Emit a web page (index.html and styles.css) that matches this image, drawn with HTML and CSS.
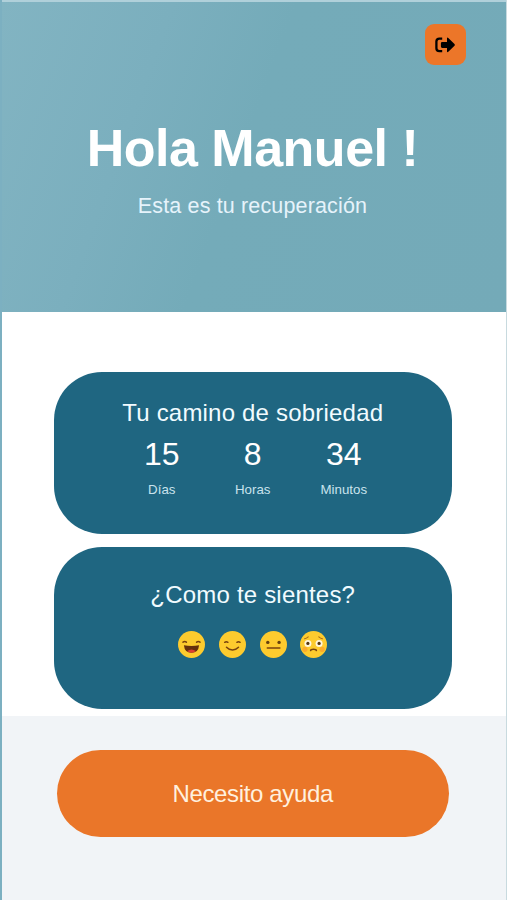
FILE: index.html
```html
<!DOCTYPE html>
<html lang="es">
<head>
<meta charset="utf-8">
<meta name="viewport" content="width=device-width, initial-scale=1">
<title>Mi recuperación</title>
<link rel="stylesheet" href="styles.css">
</head>
<body>
<div class="app">
  <header class="hero">
    <button class="logout" aria-label="Salir">
      <svg width="22" height="18" viewBox="0 0 22 18" aria-hidden="true">
        <path d="M8.2 2.7H5.4Q2.4 2.7 2.4 5.5V12.3Q2.4 15.1 5.4 15.1H8.2" fill="none" stroke="#000" stroke-width="2.3"/>
        <path d="M8.2 5.9H13V2.6Q13 1 14.3 2L20.5 8Q21.3 8.9 20.5 9.8L14.3 15.8Q13 16.8 13 15.2V11.9H8.2Q6.9 11.9 6.9 10.6V7.2Q6.9 5.9 8.2 5.9Z"/>
      </svg>
    </button>
    <h1 class="greeting">Hola Manuel !</h1>
    <p class="subtitle">Esta es tu recuperación</p>
  </header>
  <main class="cards">
    <section class="card sobriety">
      <h2 class="card-title">Tu camino de sobriedad</h2>
      <div class="counters">
        <div class="counter"><span class="value">15</span><span class="unit">Días</span></div>
        <div class="counter"><span class="value">8</span><span class="unit">Horas</span></div>
        <div class="counter"><span class="value">34</span><span class="unit">Minutos</span></div>
      </div>
    </section>
    <section class="card mood">
      <h2 class="card-title">¿Como te sientes?</h2>
      <div class="faces">
        <svg class="face" viewBox="0 0 27 27" role="img" aria-label="Muy bien">
          <circle cx="13.5" cy="13.5" r="13.5" fill="#fdcb2e"/>
          <path d="M5 11.2Q6.7 9.9 8.4 11.2M18.6 11.2Q20.3 9.9 22 11.2" class="line"/>
          <path d="M5.9 14.2Q13.5 15.6 21.1 14.2Q20.4 21.8 13.5 21.8T5.9 14.2Z" fill="#65300c"/>
          <path d="M9.2 20Q13.5 16.8 17.8 20Q16.2 21.7 13.5 21.7T9.2 20Z" fill="#dd3f30"/>
        </svg>
        <svg class="face" viewBox="0 0 27 27" role="img" aria-label="Bien">
          <circle cx="13.5" cy="13.5" r="13.5" fill="#fdcb2e"/>
          <path d="M5.7 11.3Q7.3 10 8.9 11.3M17.9 11.3Q19.5 10 21.1 11.3M7.5 16.3Q10 19 13.5 19T19.5 16.3" class="line"/>
        </svg>
        <svg class="face" viewBox="0 0 27 27" role="img" aria-label="Regular">
          <circle cx="13.5" cy="13.5" r="13.5" fill="#fdcb2e"/>
          <circle cx="7.8" cy="11.4" r="1.7" fill="#65400f"/><circle cx="19.1" cy="11.4" r="1.7" fill="#65400f"/>
          <path d="M7.3 17H19.9" class="line"/>
        </svg>
        <svg class="face" viewBox="0 0 27 27" role="img" aria-label="Mal">
          <circle cx="13.5" cy="13.5" r="13.5" fill="#fdcb2e"/>
          <circle cx="4.9" cy="18.3" r="2.6" fill="#fbab2c"/><circle cx="22.1" cy="18.3" r="2.6" fill="#fbab2c"/>
          <circle cx="7.9" cy="12.4" r="3.5" fill="#fff6dc"/><circle cx="19.1" cy="12.4" r="3.5" fill="#fff6dc"/>
          <circle cx="7.9" cy="12.4" r="1.6" fill="#54350f"/><circle cx="19.1" cy="12.4" r="1.6" fill="#54350f"/>
          <path d="M4.6 7.8Q6.5 7.4 8.2 5.9M18.8 5.9Q20.5 7.4 22.4 7.8" class="brow"/>
          <path d="M10.6 19.6Q10.8 18.3 13.5 18.3T16.4 19.6" class="line"/>
        </svg>
      </div>
    </section>
  </main>
  <footer class="footer">
    <button class="help">Necesito ayuda</button>
  </footer>
</div>
</body>
</html>
```
FILE: styles.css
```css
* { box-sizing: border-box; margin: 0; }

body {
  font-family: "Liberation Sans", Arial, sans-serif;
  background: #fff;
}

.app {
  height: 900px;
  display: flex;
  flex-direction: column;
  border-left: 2.5px solid #7cb0c1;
  border-right: 1px solid #c8dadf;
  overflow: hidden;
}

.hero {
  height: 312px;
  margin-left: -2px;
  padding: 24px 40px 0 2px;
  display: flex;
  flex-direction: column;
  align-items: center;
  border-top: 2px solid #b0d0da;
  background: linear-gradient(110deg, #82b4c2 0%, #7bafbe 28%, #74abb9 48%, #74aab8 100%);
  color: #fff;
}

.logout {
  align-self: flex-end;
  flex: none;
  width: 41px;
  height: 41px;
  margin-top: -2px;
  padding: 0 1px 0 0;
  border: 0;
  border-radius: 9px;
  background: #ec7629;
  display: flex;
  align-items: center;
  justify-content: center;
}

.greeting {
  margin: 53px 0 0 37px;
  font-size: 52px;
  line-height: 60px;
  letter-spacing: -0.5px;
  white-space: nowrap;
}

.subtitle {
  margin: 15px 0 0 37px;
  font-size: 21.5px;
  line-height: 26px;
  letter-spacing: 0.15px;
  color: #e6f3fb;
}

.cards {
  height: 404px;
  padding: 59.5px 54px 0 51.5px;
  display: flex;
  flex-direction: column;
  gap: 13.5px;
}

.card {
  height: 162px;
  flex: none;
  border-radius: 48px;
  background: #1f6681;
  color: #f1fbff;
  display: flex;
  flex-direction: column;
  align-items: center;
}

.sobriety { padding-top: 27px; }
.mood { padding-top: 34px; }

.card-title {
  font-size: 24px;
  font-weight: 400;
  line-height: 28px;
  letter-spacing: 0.2px;
}

.counters {
  display: grid;
  grid-template-columns: repeat(3, 91px);
  margin-top: 9px;
}

.counter {
  display: flex;
  flex-direction: column;
  align-items: center;
}

.value { font-size: 32px; line-height: 36px; color: #fff; }

.unit {
  margin-top: 10px;
  font-size: 13.3px;
  line-height: 16px;
  color: #c9e3ed;
}

.faces {
  display: flex;
  gap: 13.7px;
  margin-top: 21.5px;
}

.face { width: 27px; height: 27px; }

.line, .brow {
  fill: none;
  stroke: #79440f;
  stroke-width: 1.5;
  stroke-linecap: round;
}

.brow { stroke: #a86b16; stroke-width: 1.1; }

.footer {
  flex: 1;
  padding: 34px 57px 0 54.5px;
  background: #f1f4f7;
}

.help {
  display: block;
  width: 100%;
  height: 87px;
  border: 0;
  border-radius: 44px;
  background: #ea7629;
  color: #fff0de;
  font-family: inherit;
  font-size: 24px;
  letter-spacing: -0.35px;
}
```
